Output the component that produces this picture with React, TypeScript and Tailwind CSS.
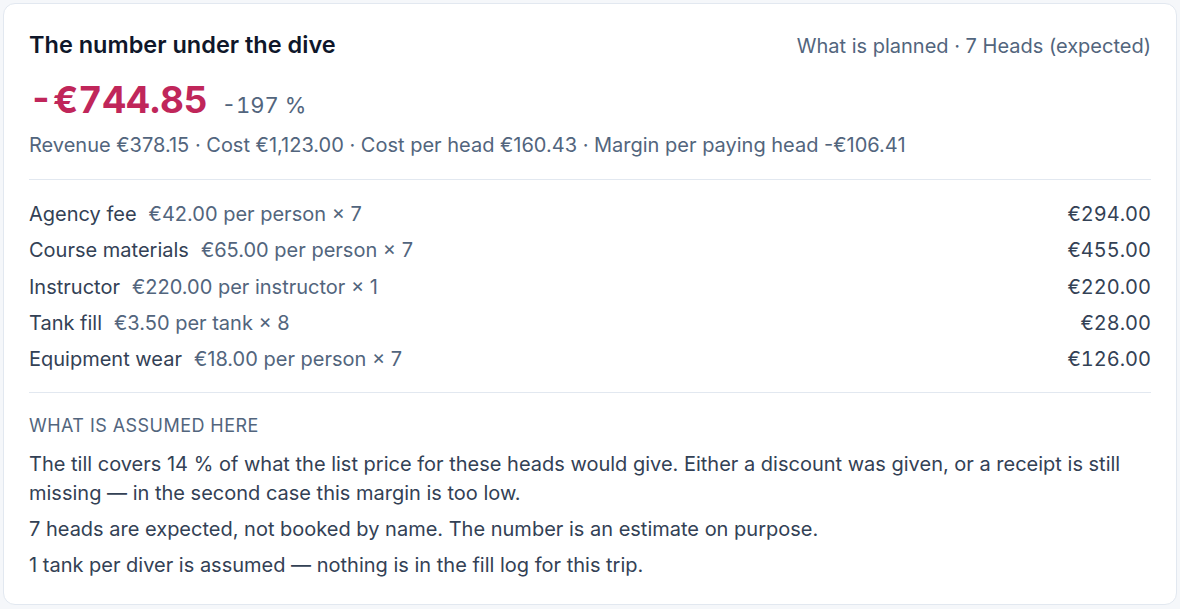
import React from "react";

type Line = { label: string; detail: string; amount: string };

const lines: Line[] = [
  { label: "Agency fee", detail: "€42.00 per person × 7", amount: "€294.00" },
  { label: "Course materials", detail: "€65.00 per person × 7", amount: "€455.00" },
  { label: "Instructor", detail: "€220.00 per instructor × 1", amount: "€220.00" },
  { label: "Tank fill", detail: "€3.50 per tank × 8", amount: "€28.00" },
  { label: "Equipment wear", detail: "€18.00 per person × 7", amount: "€126.00" },
];

const assumptions = [
  "The till covers 14 % of what the list price for these heads would give. Either a discount was given, or a receipt is still missing — in the second case this margin is too low.",
  "7 heads are expected, not booked by name. The number is an estimate on purpose.",
  "1 tank per diver is assumed — nothing is in the fill log for this trip.",
];

export default function App() {
  return (
    <div
      className="min-h-screen bg-[#f5f7fa] p-[3px]"
      style={{ fontFamily: "Inter, 'Noto Sans', sans-serif" }}
    >
      <div className="rounded-xl border border-[#e2e8f0] bg-white px-[25px] pt-[27px] pb-[24px]">
        <div className="flex items-baseline justify-between">
          <h2 className="text-[23.5px] leading-7 font-semibold text-[#0f172a]">The number under the dive</h2>
          <span className="text-[20px] leading-7 text-[#52657d]">What is planned · 7 Heads (expected)</span>
        </div>

        <div className="mt-[20px] flex items-baseline gap-[14px] tabular-nums">
          <span className="text-[37px] leading-10 font-bold text-[#c0265a]">-€744.85</span>
          <span className="text-[22px] text-[#52657d]">-197 %</span>
        </div>
        <p className="mt-[9px] text-[20px] leading-7 text-[#52657d]">
          Revenue €378.15 · Cost €1,123.00 · Cost per head €160.43 · Margin per paying head -€106.41
        </p>

        <div className="mt-[20px] border-t border-[#e2e8f0] pt-[20px]">
          <div className="flex flex-col gap-[8.3px]">
            {lines.map((l) => (
              <div key={l.label} className="flex items-baseline justify-between text-[20px] leading-7">
                <div className="flex items-baseline gap-3">
                  <span className="text-[#334155]">{l.label}</span>
                  <span className="text-[#52657d]">{l.detail}</span>
                </div>
                <span className="text-[#334155] tabular-nums">{l.amount}</span>
              </div>
            ))}
          </div>
        </div>

        <div className="mt-[19px] border-t border-[#e2e8f0] pt-[21px]">
          <p className="text-[18px] leading-6 tracking-wide text-[#52657d] uppercase">What is assumed here</p>
          <div className="mt-3 flex flex-col gap-[7px]">
            {assumptions.map((a) => (
              <p key={a} className="text-[20px] leading-[29px] text-[#334155]">
                {a}
              </p>
            ))}
          </div>
        </div>
      </div>
    </div>
  );
}
